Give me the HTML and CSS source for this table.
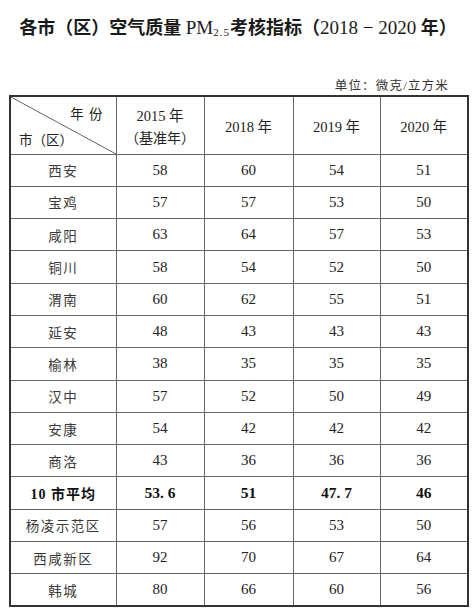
FILE: index.html
```html
<!DOCTYPE html>
<html lang="zh">
<head>
<meta charset="utf-8">
<title>各市（区）空气质量 PM2.5考核指标</title>
<link rel="stylesheet" href="styles.css">
</head>
<body>
<div class="page">
  <h1 class="title">各市（区）空气质量 <span class="lat">PM<sub class="sub">2.5</sub></span>考核指标（<span class="lat">2018 − 2020</span> 年）</h1>
  <div class="unit">单位：微克/立方米</div>
  <table class="data">
    <colgroup>
      <col class="c0"><col class="c1"><col class="c2"><col class="c3"><col class="c4">
    </colgroup>
    <thead>
      <tr class="head">
        <th class="corner">
          <div class="corner-in">
            <span class="yr">年 份</span>
            <span class="city">市（区）</span>
          </div>
        </th>
        <th><div>2015 年</div><div class="base">（基准年）</div></th>
        <th>2018 年</th>
        <th>2019 年</th>
        <th>2020 年</th>
      </tr>
    </thead>
    <tbody>
      <tr><td class="name">西安</td><td>58</td><td>60</td><td>54</td><td>51</td></tr>
      <tr><td class="name">宝鸡</td><td>57</td><td>57</td><td>53</td><td>50</td></tr>
      <tr><td class="name">咸阳</td><td>63</td><td>64</td><td>57</td><td>53</td></tr>
      <tr><td class="name">铜川</td><td>58</td><td>54</td><td>52</td><td>50</td></tr>
      <tr><td class="name">渭南</td><td>60</td><td>62</td><td>55</td><td>51</td></tr>
      <tr><td class="name">延安</td><td>48</td><td>43</td><td>43</td><td>43</td></tr>
      <tr><td class="name">榆林</td><td>38</td><td>35</td><td>35</td><td>35</td></tr>
      <tr><td class="name">汉中</td><td>57</td><td>52</td><td>50</td><td>49</td></tr>
      <tr><td class="name">安康</td><td>54</td><td>42</td><td>42</td><td>42</td></tr>
      <tr><td class="name">商洛</td><td>43</td><td>36</td><td>36</td><td>36</td></tr>
      <tr class="avg"><td class="name">10 市平均</td><td>53. 6</td><td>51</td><td>47. 7</td><td>46</td></tr>
      <tr><td class="name">杨凌示范区</td><td>57</td><td>56</td><td>53</td><td>50</td></tr>
      <tr><td class="name">西咸新区</td><td>92</td><td>70</td><td>67</td><td>64</td></tr>
      <tr><td class="name">韩城</td><td>80</td><td>66</td><td>60</td><td>56</td></tr>
    </tbody>
  </table>
</div>
</body>
</html>
```

FILE: styles.css
```css
html, body {
  margin: 0;
  padding: 0;
  background: #ffffff;
}

body {
  font-family: "Liberation Serif", "Noto Sans CJK SC", serif;
  color: #222222;
}

.page {
  width: 476px;
  padding-top: 17px;
  box-sizing: border-box;
}

.title {
  margin: 0;
  text-align: center;
  font-size: 18px;
  line-height: 22px;
  font-weight: 700;
  color: #1a1a1a;
  font-family: "Liberation Serif", "Noto Sans CJK SC", serif;
}

.title .lat {
  font-weight: 400;
  font-size: 19px;
}

.title .sub {
  font-size: 11px;
  vertical-align: -2px;
  line-height: 0;
  letter-spacing: 1px;
}

.unit {
  margin-top: 39px;
  padding-right: 27px;
  text-align: right;
  font-size: 12.5px;
  line-height: 16px;
  letter-spacing: 1.2px;
  color: #333333;
}

.data {
  margin: 1px 0 0 9px;
  width: 458px;
  table-layout: fixed;
  border-collapse: collapse;
  border: 2px solid #333333;
}

.c0 { width: 106px; }
.c1 { width: 88px; }
.c2 { width: 89px; }
.c3 { width: 87px; }
.c4 { width: 88px; }

.data th,
.data td {
  border: 1px solid #666666;
  padding: 0;
  text-align: center;
  vertical-align: middle;
  font-size: 15px;
  font-weight: 400;
  color: #222222;
}

.data tr.head {
  height: 58px;
}

.data th {
  font-size: 14.5px;
}

.data th .base {
  font-size: 14px;
  margin-top: 2px;
}

.data tbody tr {
  height: 32.3px;
}

.data td.name {
  font-size: 13.5px;
  letter-spacing: 1.5px;
  color: #3a3a3a;
}

.corner {
  background: linear-gradient(to top right, transparent calc(50% - 0.8px), #555555 50%, transparent calc(50% + 0.8px));
}

.corner-in {
  height: 56px;
  display: flex;
  flex-direction: column;
  justify-content: space-between;
  padding: 9px 12px 3px 8px;
  box-sizing: border-box;
  font-size: 13.5px;
  line-height: 18px;
}

.corner-in .yr {
  align-self: flex-end;
  letter-spacing: 1px;
}

.corner-in .city {
  align-self: flex-start;
}

.data tr.avg td {
  font-weight: 700;
  color: #111111;
  font-size: 15.5px;
}

.data tr.avg td.name {
  font-size: 14px;
  letter-spacing: 1px;
}
```
